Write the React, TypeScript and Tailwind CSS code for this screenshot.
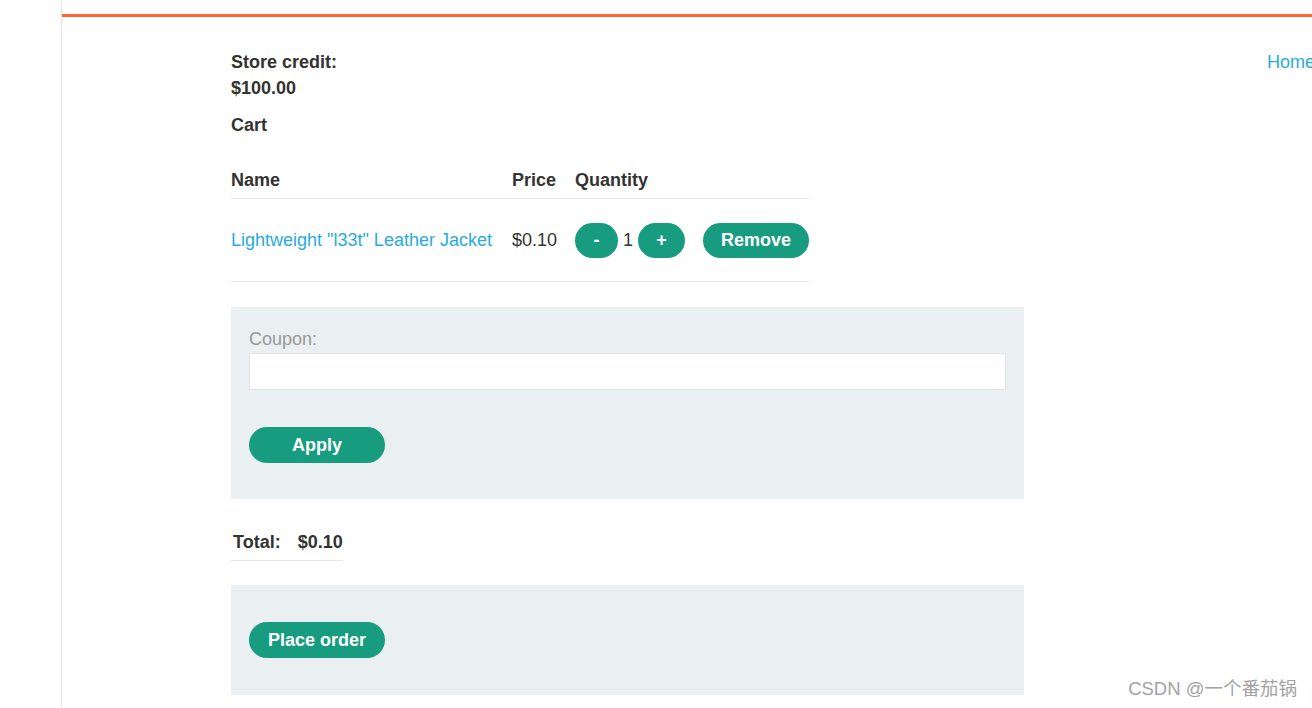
import { ReactElement } from "react";

const font = { fontFamily: '"Liberation Sans", Arial, "Noto Sans CJK SC", sans-serif' };

function PillButton({ label, className }: { label: string; className: string }): ReactElement {
  return (
    <button
      className={`rounded-full bg-[#179c7f] text-white font-bold text-[18px] leading-none flex items-center justify-center ${className}`}
    >
      {label}
    </button>
  );
}

export default function App(): ReactElement {
  return (
    <div style={font} className="relative flex h-[708px] w-[1312px] overflow-hidden bg-white text-[#333332] text-[18px]">
      <div className="w-[62px] shrink-0 border-r border-[#e6e6e6]"></div>
      <div className="flex-1 pt-[14px]">
        <div className="border-t-[3px] border-[#ff6633] pl-[169px] pt-[32px]">
          <div className="flex">
            <div className="w-[1036px] shrink-0 font-bold leading-[26px]">
              <p>Store credit:</p>
              <p>$100.00</p>
            </div>
            <a className="whitespace-nowrap leading-[26px] text-[#29abe0]">Home</a>
          </div>
          <p className="mt-[11px] font-bold leading-[26px]">Cart</p>

          <table className="mt-[23px] border-collapse">
            <thead>
              <tr className="h-[37px] border-b border-[#e6e6e6] text-left">
                <th className="pr-[20px] pt-[2px] font-bold align-middle">Name</th>
                <th className="pr-[18px] pt-[2px] font-bold align-middle">Price</th>
                <th className="pt-[2px] font-bold align-middle">Quantity</th>
              </tr>
            </thead>
            <tbody>
              <tr className="h-[83px] border-b border-[#e6e6e6]">
                <td className="pr-[20px] pt-[2px]">
                  <a className="text-[#29abe0]">Lightweight "l33t" Leather Jacket</a>
                </td>
                <td className="pr-[18px] pt-[2px]">$0.10</td>
                <td className="pt-[1px]">
                  <div className="flex items-center">
                    <PillButton label="-" className="w-[43px] h-[35px]" />
                    <span className="px-[5px]">1</span>
                    <PillButton label="+" className="w-[47px] h-[35px]" />
                    <PillButton label="Remove" className="ml-[18px] w-[106px] h-[35px]" />
                  </div>
                </td>
              </tr>
            </tbody>
          </table>

          <div className="mt-[25px] w-[793px] bg-[#eaeff2] px-[18px] pt-[20px] pb-[36px]">
            <label className="block leading-[24px] text-[#999999]">Coupon:</label>
            <input className="mt-[2px] block h-[37px] w-full border border-[#e0e4e6] bg-white outline-none" />
            <PillButton label="Apply" className="mt-[37px] w-[136px] h-[36px]" />
          </div>

          <table className="mt-[21px] border-collapse">
            <tbody>
              <tr className="h-[41px] border-b border-[#e6e6e6] font-bold">
                <td className="pl-[2px] pr-[17px] pt-[6px] align-middle">Total:</td>
                <td className="pt-[6px] align-middle">$0.10</td>
              </tr>
            </tbody>
          </table>

          <div className="mt-[24px] w-[793px] h-[110px] bg-[#eaeff2] px-[18px] pt-[37px]">
            <PillButton label="Place order" className="w-[136px] h-[36px]" />
          </div>
        </div>
      </div>
      <div className="absolute right-[15px] bottom-[6px] text-[18.5px] leading-[26px] text-[#a3a3a3]">
        CSDN @一个番茄锅
      </div>
    </div>
  );
}
